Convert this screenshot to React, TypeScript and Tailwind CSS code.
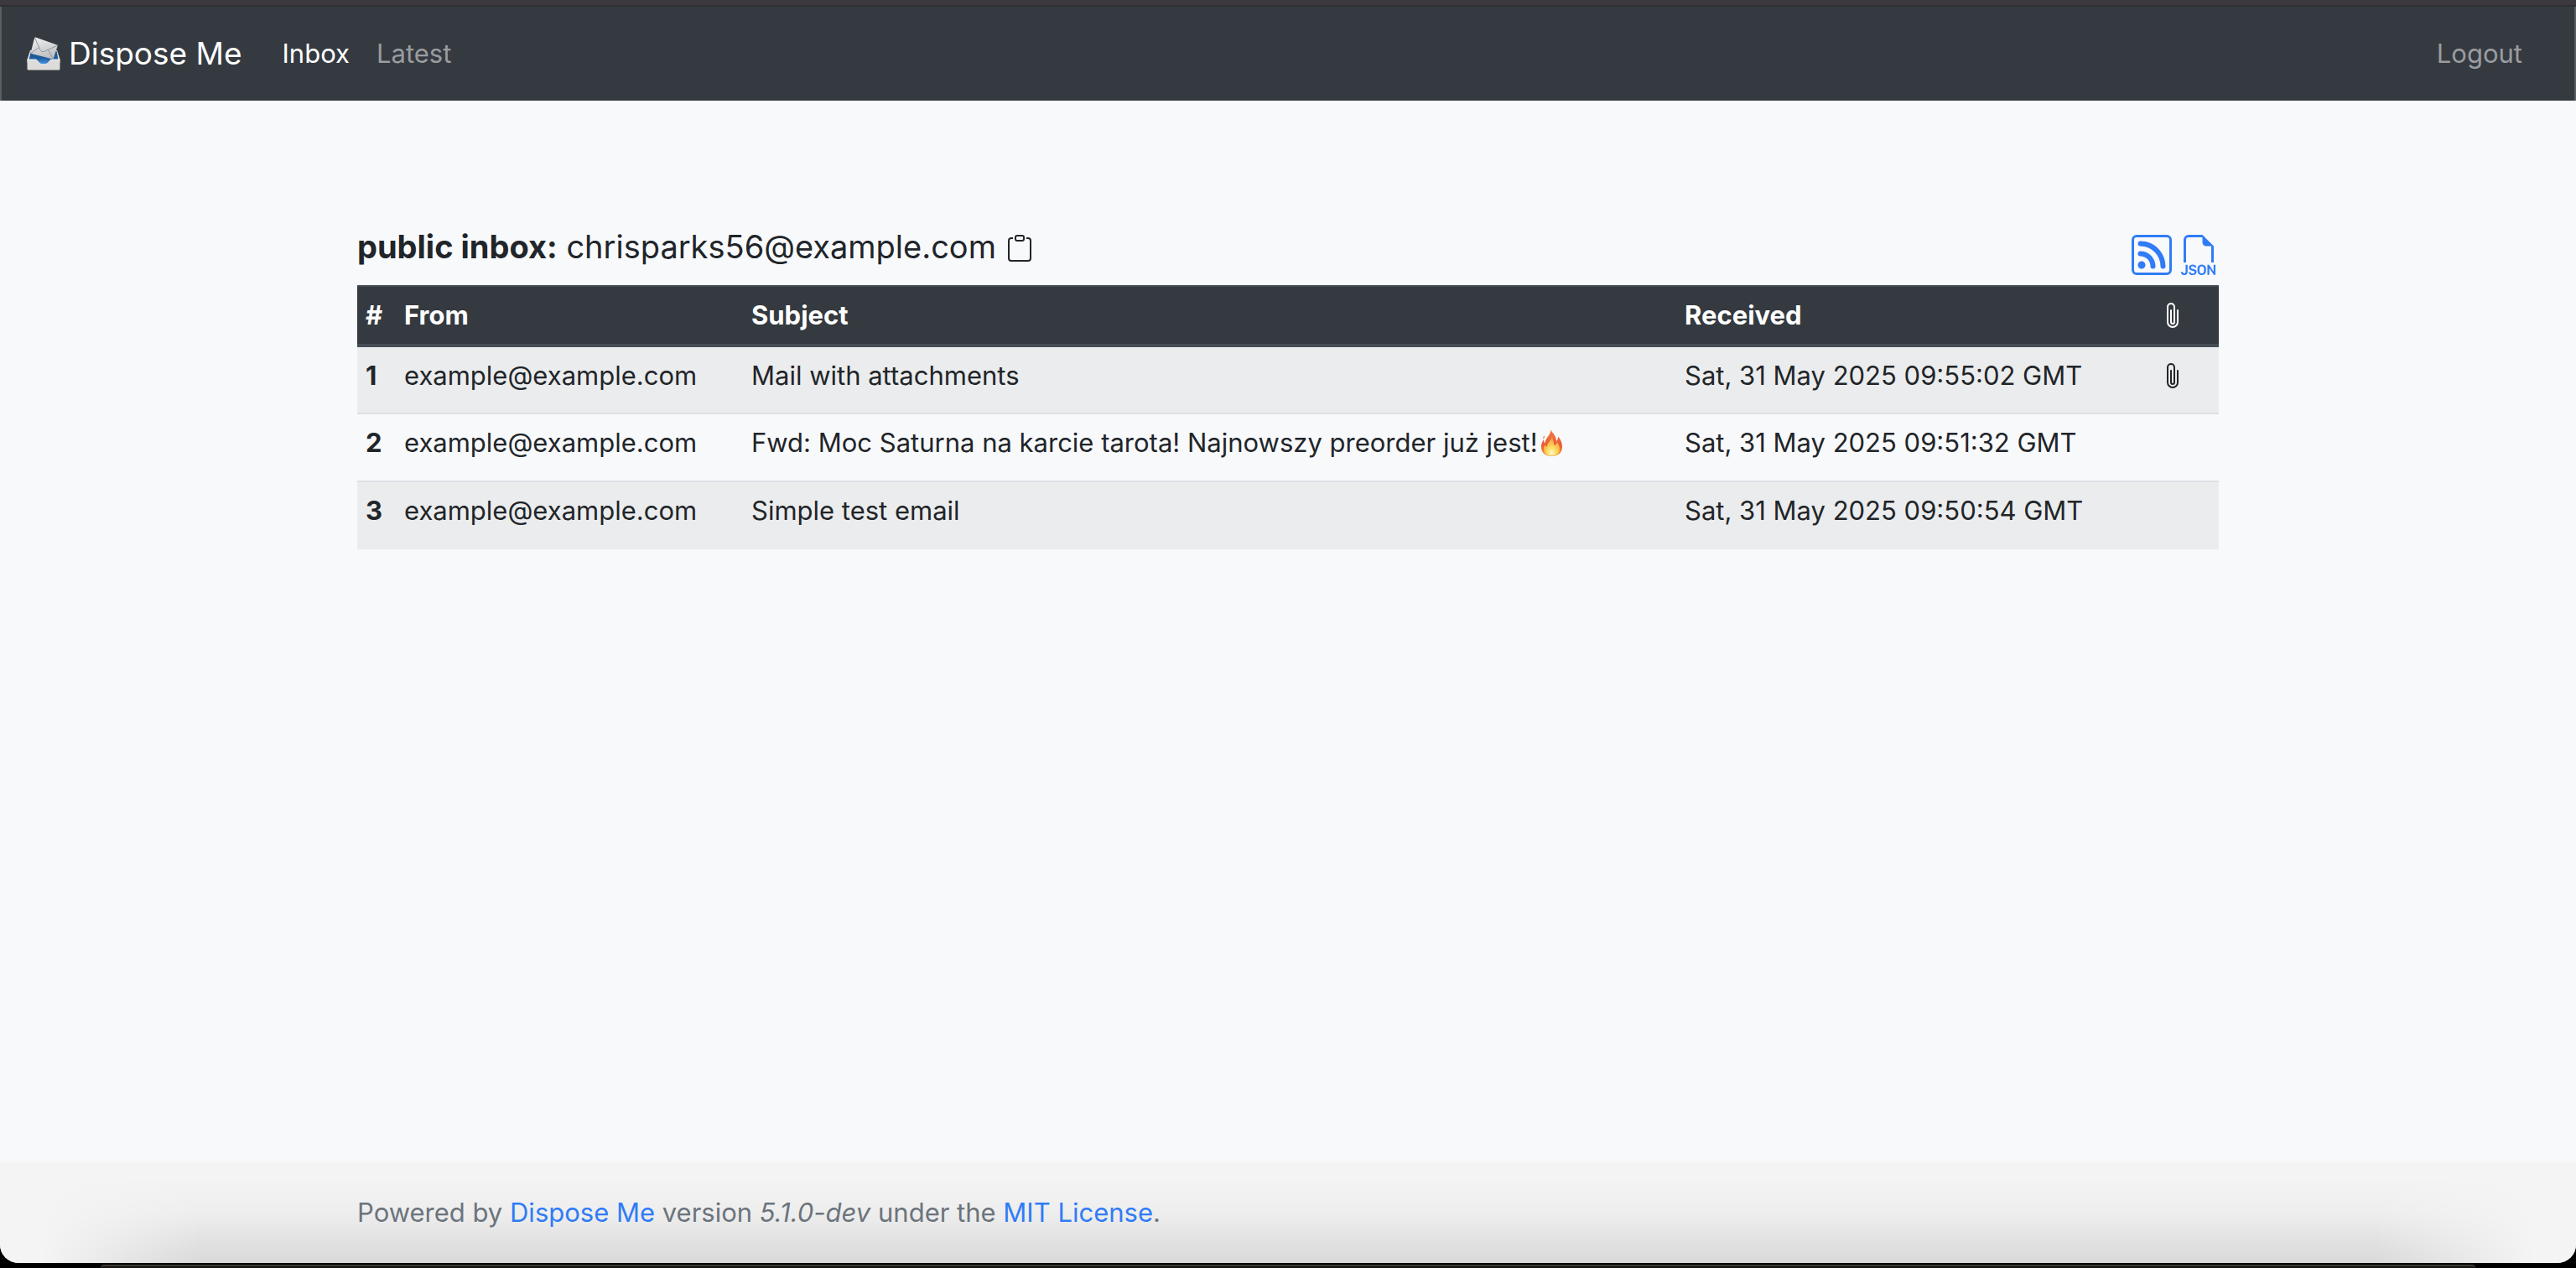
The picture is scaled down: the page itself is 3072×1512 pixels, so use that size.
import { BsClipboard, BsFiletypeJson, BsPaperclip, BsRss } from "react-icons/bs";

const mails = [
  { id: 1, from: "example@example.com", subject: "Mail with attachments", received: "Sat, 31 May 2025 09:55:02 GMT", attachment: true, fire: false },
  { id: 2, from: "example@example.com", subject: "Fwd: Moc Saturna na karcie tarota! Najnowszy preorder już jest!", received: "Sat, 31 May 2025 09:51:32 GMT", attachment: false, fire: true },
  { id: 3, from: "example@example.com", subject: "Simple test email", received: "Sat, 31 May 2025 09:50:54 GMT", attachment: false, fire: false },
];

function TrayIcon() {
  return (
    <svg className="size-10 shrink-0" viewBox="4 4 40 40" aria-hidden="true">
      <defs>
        <linearGradient id="trayInside" x1="0" y1="0" x2="0" y2="1">
          <stop offset="0" stopColor="#1b4f86" />
          <stop offset="0.5" stopColor="#1f5e9f" />
          <stop offset="1" stopColor="#5aa5f2" />
        </linearGradient>
        <linearGradient id="paper" x1="0" y1="0" x2="0.3" y2="1">
          <stop offset="0" stopColor="#f1f1f1" />
          <stop offset="1" stopColor="#bfc0c3" />
        </linearGradient>
      </defs>
      <path d="M8 20h32l3.500 11v4h-39v-4z" fill="#e4e4e2" />
      <path d="M9 21h30.500l2 10H33q-2 7-9 7t-9-7H6.500z" fill="url(#trayInside)" />
      <path d="M14.500 4.500L40 13.500q1 .4.600 1.500L36 29q-.6 1.600-2 1.200L9.500 24q-1.200-.4-.8-1.600L13 5.500q.4-1.300 1.500-1z" fill="url(#paper)" />
      <path d="M13.500 5l6.500 14.500q1.500 3 4.500 2L40 14.500M9 23.500l9.500-7M35 30l-5.500-10.500" fill="none" stroke="#8d8f96" strokeWidth="0.9" />
      <path d="M4.500 31H14q2 0 3 2 2 4 7 4t7-4q1-2 3-2h9.500v11q0 1.500-1.500 1.500H6q-1.500 0-1.500-1.500z" fill="#dddcd8" />
      <path d="M4.500 31H14q2 0 3 2 2 4 7 4t7-4q1-2 3-2h9.500" fill="none" stroke="#f6f6f4" strokeWidth="0.9" />
    </svg>
  );
}

function FireIcon() {
  return (
    <svg className="mx-1 inline-block h-8 w-[25px] align-[-5px]" viewBox="0 0 25 32" role="img" aria-label="fire">
      <defs>
        <linearGradient id="flame" x1="0" y1="0" x2="0" y2="1">
          <stop offset="0" stopColor="#ee7d4c" />
          <stop offset="0.6" stopColor="#ea5a33" />
          <stop offset="1" stopColor="#f6a13a" />
        </linearGradient>
        <radialGradient id="core" cx="0.5" cy="0.85" r="0.75">
          <stop offset="0" stopColor="#fffbc4" />
          <stop offset="0.4" stopColor="#fcd95a" />
          <stop offset="1" stopColor="#f7953f" />
        </radialGradient>
      </defs>
      <path d="M11.500 0c1 4 4 5 5.500 9 .7 2 .7 3.500 1 5 1.500-1 2-3 2-5.500 3 3 5 7.500 5 12.500C25 28 20 32 12.500 32S0 28 0 21c0-4.500 1.300-6.500 3-9 0 2 .4 3.500 1.500 4.500C5 9.500 11.500 7 11.500 0z" fill="url(#flame)" />
      <path d="M3.500 7.500c1 1.500.3 2.500-1 4-.6-1.600 0-3 1-4z" fill="#ee7d4c" />
      <path d="M13 7c0 5 2 7 2.500 12 1.800-.5 3-2 3.500-4 2 3 3 5.500 3 8.500 0 5-4 8-9.500 8S3 28.500 3 23.500c0-2.500.7-4 1.700-5.500.3 1.500 1 2.300 2.300 2.500C7 15 13 13 13 7z" fill="url(#core)" />
    </svg>
  );
}

export default function App() {
  return (
    <div className="relative min-h-screen bg-black pb-1.5 font-[Inter,'Liberation_Sans',sans-serif] text-[31px] leading-[48px] text-[#212529]">
      <div className="flex min-h-[calc(100vh-6px)] flex-col overflow-hidden rounded-b-[22px] bg-[#f8f9fb]">
        <div className="h-2 border-b-2 border-[#302f33] bg-[#3b393d]" />
        <nav className="flex items-center border-x-2 border-[#5a5d61] bg-[#353a41] px-[30px] py-8">
          <a href="#" className="flex items-center gap-2.5 text-[37px] text-white">
            <TrayIcon />
            Dispose Me
          </a>
          <a href="#inbox" className="ml-12 text-white">Inbox</a>
          <a href="#latest" className="ml-8 text-[#9a9c9f]">Latest</a>
          <a href="#logout" className="mr-8 ml-auto text-[#9a9c9f]">Logout</a>
        </nav>
        <main className="mx-auto w-full max-w-[2280px] grow px-[30px] pt-[148px]">
          <div className="flex items-start justify-between pb-3">
            <h1 className="flex items-center gap-3 pt-0.5 text-[38px]">
              <span><b className="font-bold">public inbox:</b> chrisparks56@example.com</span>
              <button type="button" aria-label="Copy address" className="pt-1"><BsClipboard className="size-8" /></button>
            </h1>
            <div className="flex gap-2 pt-3 text-[#307cf6]">
              <a href="#rss" aria-label="RSS feed"><BsRss className="size-12" /></a>
              <a href="#json" aria-label="JSON feed"><BsFiletypeJson className="size-12" /></a>
            </div>
          </div>
          <table className="w-full table-fixed border-collapse text-left">
            <thead>
              <tr className="border-t-2 border-b-4 border-[#464d55] bg-[#353a41] text-white">
                <th className="w-[46px] px-2.5 py-2.5 font-bold">#</th>
                <th className="w-[414px] px-2.5 py-2.5 font-bold">From</th>
                <th className="px-2.5 py-2.5 font-bold">Subject</th>
                <th className="w-[566px] px-2.5 py-2.5 font-bold">Received</th>
                <th className="w-[81px] px-2.5 py-2.5"><BsPaperclip className="size-8" aria-label="Attachments" /></th>
              </tr>
            </thead>
            <tbody>
              {mails.map((m) => (
                <tr key={m.id} className="h-[81px] border-t-2 border-[#dee0e6] align-top first:border-[#464d55] odd:bg-[#ebeced]">
                  <th scope="row" className="px-2.5 pt-2.5 font-bold">{m.id}</th>
                  <td className="px-2.5 pt-2.5">{m.from}</td>
                  <td className="px-2.5 pt-2.5"><a href={`#mail-${m.id}`}>{m.subject}{m.fire && <FireIcon />}</a></td>
                  <td className="px-2.5 pt-2.5">{m.received}</td>
                  <td className="px-2.5 pt-[18px]">{m.attachment && <BsPaperclip className="size-8" aria-label="Has attachments" />}</td>
                </tr>
              ))}
            </tbody>
          </table>
        </main>
        <footer className="relative bg-[#f4f4f4] text-[#6c747c]">
          <div className="pointer-events-none absolute inset-0 bg-[linear-gradient(to_bottom,transparent_15%,#00000006_50%,#0000001c_100%)] [mask-image:linear-gradient(to_right,transparent_50px,black_240px,black_calc(100%-240px),transparent_calc(100%-50px))]" />
          <p className="relative mx-auto max-w-[2280px] px-[30px] leading-[120px]">
            Powered by <a href="#project" className="text-[#307cf6]">Dispose Me</a> version <em>5.1.0-dev</em> under the <a href="#license" className="text-[#307cf6]">MIT License</a>.
          </p>
        </footer>
      </div>
      <div className="absolute inset-x-[120px] bottom-0 h-1 rounded-t-full border-t-2 border-[#3a3a38] bg-[#15120f]" />
    </div>
  );
}
